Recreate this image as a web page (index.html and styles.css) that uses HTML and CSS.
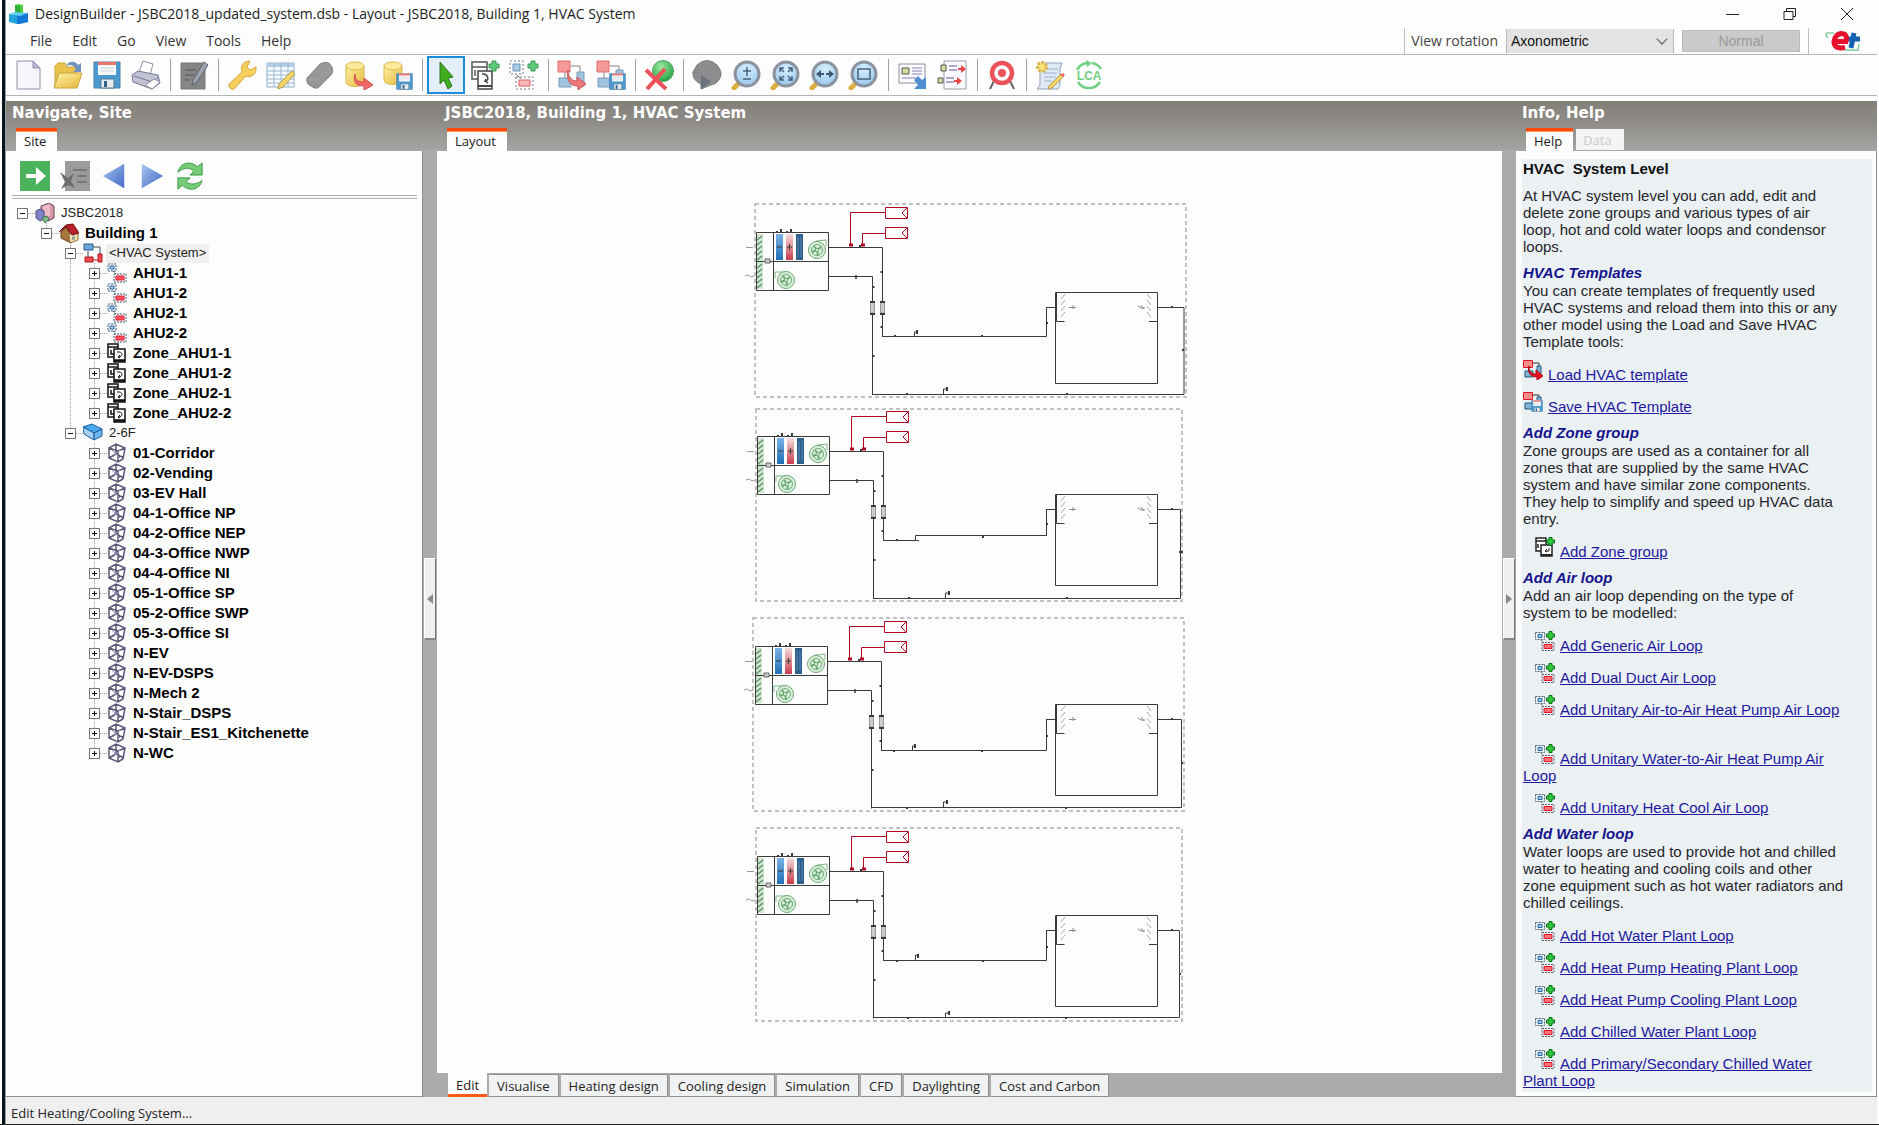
FILE: index.html
```html
<!DOCTYPE html>
<html lang="en">
<head>
<meta charset="utf-8">
<title>DesignBuilder - JSBC2018_updated_system.dsb</title>
<link rel="stylesheet" href="styles.css">
</head>
<body>
<svg class="defs" aria-hidden="true">
  <defs>
    <linearGradient id="g-blue" x1="0" y1="0" x2="0" y2="1"><stop offset="0" stop-color="#7db3e6"/><stop offset="1" stop-color="#1d6fb8"/></linearGradient>
    <linearGradient id="g-red" x1="0" y1="0" x2="0" y2="1"><stop offset="0" stop-color="#f4dede"/><stop offset="1" stop-color="#c93a4a"/></linearGradient>
    <linearGradient id="g-yel" x1="0" y1="0" x2="1" y2="1"><stop offset="0" stop-color="#fff3a6"/><stop offset="1" stop-color="#e5b73a"/></linearGradient>
    <linearGradient id="g-nav" x1="0" y1="0" x2="1" y2="1"><stop offset="0" stop-color="#a9c6f0"/><stop offset="1" stop-color="#3f68c4"/></linearGradient>
    <radialGradient id="g-ball" cx=".4" cy=".3" r=".8"><stop offset="0" stop-color="#9be7a0"/><stop offset="1" stop-color="#1c9a3c"/></radialGradient>
    <radialGradient id="g-lens" cx=".5" cy=".3" r=".8"><stop offset="0" stop-color="#d8eefc"/><stop offset="1" stop-color="#8ec3ec"/></radialGradient>

    <symbol id="plus" viewBox="0 0 12 12"><path d="M4 1h4v3h3v4H8v3H4V8H1V4h3z" fill="#5fc97c" stroke="#3c9a58"/></symbol>
    <symbol id="disk" viewBox="0 0 28 28"><path d="M1 1h26v26H1z" fill="#4a9ad0" stroke="#4a7fae"/><path d="M5 1h18v13H5z" fill="#f4f8fa"/><path d="M5 1h18v3H5z" fill="#f0736a"/><path d="M7 7h14M7 10h14" stroke="#c8d4dc"/><path d="M8 18h13v9H8z" fill="#e4ecf2" stroke="#5a7890"/><path d="M11 20h3v6h-3z" fill="#32618a"/></symbol>
    <symbol id="lens" viewBox="0 0 30 30"><path d="M3 28l6-6" stroke="#dcb040" stroke-width="5" stroke-linecap="round"/><circle cx="16" cy="14" r="12" fill="url(#g-lens)" stroke="#8c929e" stroke-width="3"/></symbol>

    <symbol id="i-new" viewBox="0 0 30 30"><path d="M3 1h16l7 7v21H3z" fill="#f5f5fb" stroke="#8f8fa8"/><path d="M19 1v7h7z" fill="#b9b9dc" stroke="#8f8fa8"/></symbol>
    <symbol id="i-open" viewBox="0 0 30 30"><path d="M2 27V6l3-3h7l2 4h10v6" fill="#e9c34d" stroke="#c9a53e"/><path d="M1 28l5-15h23l-5 15z" fill="url(#g-yel)" stroke="#c9a53e"/><path d="M13 6c2-5 9-6 12-1l3-2v9h-8l3-3c-2-4-6-5-10-3z" fill="#6e93bd"/></symbol>
    <symbol id="i-save" viewBox="0 0 30 30"><use href="#disk" x="1" y="1" width="28" height="28"/></symbol>
    <symbol id="i-print" viewBox="0 0 30 30"><path d="M8 12L12 1l10 3-3 11z" fill="#fff" stroke="#8c8ca4"/><path d="M1 15l6-4 20 4 2 8-8 6L2 22z" fill="#c3c3d6" stroke="#77778f"/><path d="M3 16l18 6 7-5" stroke="#77778f" fill="none"/><path d="M14 25l9-6 6 3-8 7z" fill="#fff" stroke="#8c8ca4"/></symbol>
    <symbol id="i-edit" viewBox="0 0 30 30"><path d="M2 3h24v26H2z" fill="#858585" stroke="#777"/><path d="M6 10h11M6 15h9M6 20h4" stroke="#666" stroke-width="1.500"/><path d="M14 20L25 2l4 3-11 17-5 3z" fill="#9aa3ad" stroke="#5d646c"/></symbol>
    <symbol id="i-wrench" viewBox="0 0 30 30"><path d="M2 24L15 12c-2-5 1-11 8-11l-3 6 3 3 6-3c1 7-5 11-10 9L7 29c-3 1-6-2-5-5z" fill="#f7cf5c" stroke="#d8a640"/></symbol>
    <symbol id="i-table" viewBox="0 0 30 30"><path d="M1 3h27v24H1z" fill="#f6fafd" stroke="#8eaecb"/><path d="M1 3h27v4H1z" fill="#b4cde4"/><path d="M1 11h27M1 15h27M1 19h27M1 23h27M8 3v24M15 3v24M22 3v24" stroke="#9db8d2"/><path d="M13 24L26 11l3 3-12 13-5 2z" fill="#f4d667" stroke="#b99a4c"/></symbol>
    <symbol id="i-eraser" viewBox="0 0 30 30"><path d="M2 18L15 4q5-3 9-1l3 4q2 5-1 8L13 28q-4 1-7-2l-3-2q-2-3-1-6z" fill="#979797" stroke="#858585"/><path d="M3 19l9 1L26 7" stroke="#a4a4a4" fill="none"/></symbol>
    <symbol id="i-dbload" viewBox="0 0 30 30"><path d="M2 6v16c0 6 18 6 18 0V6z" fill="url(#g-yel)" stroke="#d8b94c"/><ellipse cx="11" cy="6" rx="9" ry="4" fill="#fbeb9a" stroke="#d8b94c"/><path d="M11 14c0 7 4 8 9 8v-4l9 7-9 5v-4c-8 0-11-4-9-12z" fill="#ee6a6a" stroke="#d34e52"/></symbol>
    <symbol id="i-dbsave" viewBox="0 0 30 30"><path d="M1 6v14c0 6 18 6 18 0V6z" fill="url(#g-yel)" stroke="#d8b94c"/><ellipse cx="10" cy="6" rx="9" ry="4" fill="#fbeb9a" stroke="#d8b94c"/><use href="#disk" x="13" y="13" width="17" height="17"/></symbol>
    <symbol id="i-cursor" viewBox="0 0 30 30"><path d="M9 2l13 15-5 1 4 8-4 3-4-9-4 4z" fill="#3fae1f" stroke="#2c7418"/></symbol>
    <symbol id="i-zone" viewBox="0 0 30 30"><path d="M2 2h15v17H2zM2 7h15M5 10v6" fill="none" stroke="#555" stroke-width="1.500"/><path d="M8 11h14v18H8z" fill="#fff" stroke="#444" stroke-width="1.500"/><path d="M8 26h14" stroke="#444" stroke-width="2"/><path d="M12 14c6-1 8 7 3 7l1-2m-1 2l3 2" fill="none" stroke="#444" stroke-width="1.500"/><use href="#plus" x="18" y="0" width="12" height="12"/></symbol>
    <symbol id="i-loop" viewBox="0 0 30 30"><path d="M1 1h13v13H1z" fill="none" stroke="#77808c" stroke-dasharray="2 2"/><path d="M4 4h7v7H4z" fill="#a9cbe8" stroke="#6b8eb0"/><path d="M8 15l4 4" stroke="#77808c"/><path d="M7 17h17v12H7z" fill="none" stroke="#77808c" stroke-dasharray="2 2"/><path d="M10 20h11v6H10z" fill="#f9b9b9" stroke="#e05a60"/><use href="#plus" x="18" y="0" width="12" height="12"/></symbol>
    <symbol id="i-tload" viewBox="0 0 30 30"><path d="M14 6h9v6M8 12v6M13 22h5" stroke="#888" fill="none"/><path d="M2 18h12v9H2zM20 12h7v14h-7z" fill="#9fc3de" stroke="#7a9db8"/><path d="M1 1h12v11H1z" fill="#f59a9a" stroke="#e06a6e"/><path d="M11 10c0 8 4 11 9 11v-4l9 7-8 6v-4c-8 0-12-6-10-16z" fill="#ee7a7e" stroke="#cf5358"/></symbol>
    <symbol id="i-tsave" viewBox="0 0 30 30"><path d="M14 6h9v6M8 12v6" stroke="#888" fill="none"/><path d="M2 18h12v9H2zM20 10h7v14h-7z" fill="#9fc3de" stroke="#7a9db8"/><path d="M1 1h12v11H1z" fill="#f59a9a" stroke="#e06a6e"/><use href="#disk" x="13" y="13" width="17" height="17"/></symbol>
    <symbol id="i-del" viewBox="0 0 30 30"><circle cx="19" cy="11" r="10.500" fill="url(#g-ball)" stroke="#4aa660"/><path d="M2 10l20 19M21 9L3 29" stroke="#f0505a" stroke-width="4"/></symbol>
    <symbol id="i-ball" viewBox="0 0 30 30"><path d="M5 5q10-9 20 0 6 7 3 13-3 6-9 7l-10 4V24q-9-4-8-12z" fill="#8d8d8f" stroke="#7b7b7d"/><path d="M9 15l10 7-10 7z" fill="#6b727b"/></symbol>
    <symbol id="i-zin" viewBox="0 0 30 30"><use href="#lens"/><path d="M16 7v9M12 11h8M12 19h8" stroke="#47617e" stroke-width="1.500"/></symbol>
    <symbol id="i-zfit" viewBox="0 0 30 30"><use href="#lens"/><path d="M10 12V8h4M18 8h4v4M22 16v4h-4M14 20h-4v-4M10 8l4 4M22 8l-4 4M22 20l-4-4M10 20l4-4" fill="none" stroke="#47617e" stroke-width="1.500"/></symbol>
    <symbol id="i-zpan" viewBox="0 0 30 30"><use href="#lens"/><path d="M7 14l5-4v3h3v2h-3v3zM25 14l-5-4v3h-3v2h3v3z" fill="#3f5874"/></symbol>
    <symbol id="i-zwin" viewBox="0 0 30 30"><use href="#lens"/><path d="M10 9h12v10H10z" fill="none" stroke="#47617e" stroke-width="1.500"/></symbol>
    <symbol id="i-card" viewBox="0 0 30 30"><path d="M1 4h26v19H1z" fill="#fbfbff" stroke="#8b8b9c"/><path d="M4 8h7v6H4z" fill="#cfe09a" stroke="#555"/><path d="M14 8h10M14 11h10M14 14h10M4 18h14" stroke="#b0a8cc" stroke-width="1.500"/><path d="M16 20l4-4 4 4 4-3v12H16l4-4z" fill="#4d8fd0"/></symbol>
    <symbol id="i-map" viewBox="0 0 30 30"><path d="M7 1h22v28H7z" fill="#fbfbff" stroke="#9a9aaa"/><path d="M4 5h5v6H4zM1 18h5v5H1z" fill="#cfe09a" stroke="#555"/><path d="M12 6h8M12 10h8M9 18h8M9 22h8" stroke="#b0a8cc" stroke-width="2"/><path d="M21 8h3V5l5 4-5 4v-3h-3zM17 20h3v-3l5 4-5 4v-3h-3z" fill="#e8484c"/></symbol>
    <symbol id="i-target" viewBox="0 0 30 30"><path d="M7 21l-4 8M23 21l4 8" stroke="#666" stroke-width="2"/><circle cx="15" cy="13" r="10" fill="#fff" stroke="#ea5259" stroke-width="4.500"/><circle cx="15" cy="13" r="4" fill="#ea5259"/></symbol>
    <symbol id="i-script" viewBox="0 0 30 30"><path d="M8 3h19l-2 5v17l-2 4H2l3-4V8z" fill="#dfe9f5" stroke="#91a3bc"/><path d="M12 9h11M9 13h13M9 17h12M9 21h8" stroke="#9db1cb"/><circle cx="7" cy="7" r="4.500" fill="#fbe07a" stroke="#d6b245" stroke-width="3" stroke-dasharray="2.500 1.500"/><path d="M14 26l12-12 3 2-12 12-4 1z" fill="#f4d667" stroke="#b99a4c"/><path d="M25 15l3-2 2 2-2 2z" fill="#ee6a6a"/></symbol>
    <symbol id="i-lca" viewBox="0 0 30 30"><path d="M3 10A13 13 0 0 1 14 3M18 3A13 13 0 0 1 27 9M26 22A13 13 0 0 1 4 22" fill="none" stroke="#72cf86" stroke-width="2.500"/><path d="M12 0l6 3-5 4z" fill="#72cf86"/><text x="15" y="20" class="lca">LCA</text></symbol>

    <symbol id="n-go" viewBox="0 0 30 30"><path d="M0 0h30v30H0z" fill="#4db25c"/><path d="M6 13h10V6l10 9-10 9v-7H6z" fill="#fff"/></symbol>
    <symbol id="n-list" viewBox="0 0 30 30"><path d="M5 0h25v30H5z" fill="#9b9b9b"/><path d="M13 9h14M17 15h10M17 21h10" stroke="#777" stroke-width="2"/><path d="M0 11l8 6 6-5-3 8 4 7-7-3-7 4 4-7z" fill="#6e6e6e"/></symbol>
    <symbol id="n-prev" viewBox="0 0 30 30"><path d="M26 2v26L3 15z" fill="url(#g-nav)"/></symbol>
    <symbol id="n-next" viewBox="0 0 30 30"><path d="M4 2v26l23-13z" fill="url(#g-nav)"/></symbol>
    <symbol id="n-sync" viewBox="0 0 30 30"><path d="M2 11C4 1 15-2 23 5l5-4v13H15l4-4C15 5 8 6 2 11zM28 20c-3 10-14 12-21 5l-5 4V17h13l-4 4c4 4 11 3 17-1z" fill="#74cc74" stroke="#3b9648"/></symbol>

    <symbol id="t-site" viewBox="0 0 20 20"><path d="M6 3l8-3 5 3v12l-6 3-7-4z" fill="#d99aa8" stroke="#5a4450"/><path d="M8 3l7-2v12l-7 1z" fill="#efb9c5"/><path d="M1 8l4-2 4 2v8l-4 2-4-3z" fill="#7f82c8" stroke="#4b4b80"/><path d="M7 15l5-2 2 3-4 4z" fill="#7ebd86" stroke="#447a4c"/></symbol>
    <symbol id="t-house" viewBox="0 0 20 20"><path d="M2 9l5-5 5 9v7l-10-5z" fill="#a8763a" stroke="#6b4420"/><path d="M10 12l3-4 6 3v6l-8 3z" fill="#f1dfae" stroke="#8b6f40"/><path d="M0 9L7 2l7-1 6 9-7 2-6-8z" fill="#b8202c" stroke="#701018"/><path d="M13 14l3-1v3l-3 1z" fill="#8b9c9a"/></symbol>
    <symbol id="t-hvac" viewBox="0 0 20 20"><path d="M10 4h7v8M5 8v6" stroke="#3a4a5a" fill="none"/><path d="M1 1h9v6H1z" fill="#6aa6dc" stroke="#2b5a8a"/><path d="M2 14h8v5H2zM15 11h4v8h-4z" fill="#f04a50" stroke="#b01820"/><path d="M10 17h5" stroke="#b01820"/></symbol>
    <symbol id="t-ahu" viewBox="0 0 20 20"><path d="M1 1h8v7H1zM7 11h12v8H7zM6 8l3 3" fill="none" stroke="#3b5d7e" stroke-dasharray="2 1"/><path d="M3 3h4v3H3z" fill="#a5cdec" stroke="#2b6ba4"/><path d="M9 13h8v4H9z" fill="#ff5560" stroke="#e01828"/></symbol>
    <symbol id="t-zone" viewBox="0 0 20 20"><path d="M1 1h10v13H1zM1 4h10M4 7v4h4" fill="#fff" stroke="#111" stroke-width="1.500"/><path d="M7 6h11v13H7z" fill="#fff" stroke="#111" stroke-width="1.500"/><path d="M7 17.500h11" stroke="#111" stroke-width="2.500"/><path d="M10 9c6-1 7 5 1 5l2-2m-2 2l2 1" fill="none" stroke="#111"/></symbol>
    <symbol id="t-block" viewBox="0 0 20 20"><path d="M0 4l9-3 10 5-8 4z" fill="#49a8ee" stroke="#1c5e9e"/><path d="M0 4l11 6v7L1 11z" fill="#a8d2f6" stroke="#1c5e9e"/><path d="M11 10l8-4v7l-8 4z" fill="#6fb4ec" stroke="#1c5e9e"/></symbol>
    <symbol id="t-cube" viewBox="0 0 20 20"><path d="M2 5l7-4 9 4-2 11-5 3-9-4zM2 5l9 3 7-3M11 8v11M9 1v10l-7 4M9 11l8 4" fill="none" stroke="#5c5878" stroke-width="1.500"/><path d="M5 7l8 8M13 7l-7 7" stroke="#8d89aa"/></symbol>

    <symbol id="h-plus" viewBox="0 0 9 9"><path d="M3 .5h3v2.500h2.500v3H6v2.500H3V6H.5V3H3z" fill="#2fd03c" stroke="#0a6a18"/></symbol>
    <symbol id="h-loop" viewBox="0 0 20 20"><path d="M.5 1.500h9v7h-9zM7 11.500h12v8H7zM6 9l3 3" fill="none" stroke="#51616e" stroke-dasharray="2 1"/><path d="M3 3.500h4v3H3z" fill="#a5cdec" stroke="#2b6ba4"/><path d="M9 13.500h8v4H9z" fill="#ff7078" stroke="#e01828"/><use href="#h-plus" x="11" y="0" width="9" height="9"/></symbol>
    <symbol id="h-zone" viewBox="0 0 20 20"><path d="M1 1h10v13H1zM1 4h10M3 7v4" fill="#fff" stroke="#222" stroke-width="1.500"/><path d="M6 8h11v11H6z" fill="#fff" stroke="#222" stroke-width="1.500"/><path d="M6 18h11" stroke="#222" stroke-width="2"/><path d="M14 11v3h-4l2-2m-2 2l2 1" fill="none" stroke="#222"/><use href="#h-plus" x="11" y="0" width="9" height="9"/></symbol>
    <symbol id="h-load" viewBox="0 0 20 20"><path d="M10 3h6v4" stroke="#333" fill="none"/><path d="M2 11h8v6H2zM14 6h4v10h-4z" fill="#7fb2d8" stroke="#2c5878"/><path d="M.5.500h9v7h-9z" fill="#ff8a8a" stroke="#d81a24"/><path d="M6 6c0 7 3 8 7 8v-4l7 6-6 4v-3C8 17 4 13 6 6z" fill="#f01420" stroke="#a80810"/></symbol>
    <symbol id="h-save" viewBox="0 0 20 20"><path d="M10 3h6v4" stroke="#333" fill="none"/><path d="M2 11h8v6H2zM14 5h4v6h-4z" fill="#7fb2d8" stroke="#2c5878"/><path d="M.5.500h9v7h-9z" fill="#ff8a8a" stroke="#d81a24"/><use href="#disk" x="8" y="8" width="12" height="12"/></symbol>

    <g id="fan" fill="none" stroke="#6aaa72"><circle cx="0" cy="0" r="8.500" fill="#dcefdc"/><circle cx="0" cy="0" r="5.500"/><path d="M0 0l4-3M0 0l1 5M0 0l-5 2M0 0l-3-4" stroke-width="2"/><circle cx="0" cy="0" r="1.500" fill="#fff"/></g>
    <g id="ahu" fill="none" stroke="#3a3a3a">
      <path d="M1 2h6v55H1z" fill="#cfe6d0" stroke="none"/>
      <path d="M1 8l5-4M1 13l5-4M1 18l5-4M1 23l5-4M1 28l5-4M1 36l5-4M1 41l5-4M1 46l5-4M1 51l5-4M1 56l5-4" stroke="#5f9367" stroke-width="1.500"/>
      <path d="M20 2h7v26h-7z" fill="url(#g-blue)" stroke="none"/><path d="M30 2h7v26h-7z" fill="url(#g-red)" stroke="none"/><path d="M40 2h7v26h-7z" fill="#2c5f8c" stroke="none"/>
      <path d="M42 5v20M45 5v20" stroke="#5f88b0"/><path d="M21 15h5M31 15h5M33.500 12v6"/>
      <path d="M60 9l10-1v6" stroke="#7fb785"/><use href="#fan" x="61" y="18"/>
      <path d="M19 46v-6h10" stroke="#7fb785"/><use href="#fan" x="30" y="48"/>
      <path d="M.5.500h72v58H.5zM.5 29.500h72M17.500 0v58"/>
      <path d="M9 27h5v4H9z" fill="#ccc" stroke="#666"/>
      <path d="M20 0h2M25-3v4M30 0h2M35-3v4" stroke-width="2"/>
      <path d="M-10 15.500h7M-11 44l3-1 3 2 3-1" stroke="#999"/>
      <path d="M73 15.500h53.500v89.500M73 44.500h43.500v118"/>
      <path d="M100 43v4" stroke-width="1.500"/>
      <path d="M114.500 70h4v11h-4zM124.500 70h4v11h-4z" fill="#ccc" stroke="#999"/>
      <path d="M114 70h5M114 82h5M124 70h5M124 82h5" stroke-width="2"/>
      <path d="M125.500 39v2M125.500 94v2M117.500 54v2M117.500 123v2M103 14h2" stroke-width="2"/>
      <g stroke="#b00a22"><path d="M129 -19.500H94.500V14M129 1.500H106.500V14"/><path d="M129.500 -24.500h22v11h-22zM129.500 -4.500h22v11h-22zM151 -24l-5 5 5 5M151 -4l-5 5 5 5"/><path d="M93 13h4M105 13h4" stroke-width="3"/></g>
    </g>
    <g id="room" fill="none" stroke="#3a3a3a">
      <path d="M.5.500h102v91H.5zM1.500 1v28.500h8M94 29.500h8.500M-9 15.500h9M102 15.500h22"/>
      <path d="M6 7l4-5M6 13l4-5M6 19l4-5M6 25l4-5M92 2l4 5M92 8l4 5M92 14l4 5M92 20l4 5" stroke="#aaa"/>
      <path d="M14 15.500h7M18 13v4M83 14l3 2h4M86 13l3 4" stroke="#888"/>
      <path d="M117 14v2" stroke-width="2"/>
    </g>
  </defs>
</svg>

<div class="app">
  <header class="titlebar">
    <svg class="logo" viewBox="0 0 20 20"><path d="M6 1l3-1 5 1v9H6z" fill="#4ccf3c"/><path d="M6 1l5 1v9H6z" fill="#2fae3a"/><path d="M0 10l8 1v9l-8-2z" fill="#1fa5d8"/><path d="M8 11l11-2v9l-8 2H8z" fill="#1478d8"/><path d="M0 10l6-2 13 1-8 3z" fill="#5ecdf4"/></svg>
    <h1 class="title">DesignBuilder - JSBC2018_updated_system.dsb - Layout - JSBC2018, Building 1, HVAC System</h1>
    <div class="winbtns">
      <button aria-label="Minimize"><svg viewBox="0 0 14 14"><path d="M0 7.500h13"/></svg></button>
      <button aria-label="Restore"><svg viewBox="0 0 14 14"><path d="M1 4.500h9v8H1zM3.500 4V1.500h9v8H10"/></svg></button>
      <button aria-label="Close"><svg viewBox="0 0 14 14"><path d="M1 1l12 12M13 1L1 13"/></svg></button>
    </div>
  </header>

  <div class="menurow">
    <nav class="menu"><button>File</button><button>Edit</button><button>Go</button><button>View</button><button>Tools</button><button>Help</button></nav>
    <div class="viewbar">
      <label for="rotation">View rotation</label>
      <div class="selectbox"><select id="rotation"><option>Axonometric</option></select></div>
      <button class="normal" disabled>Normal</button>
    </div>
    <svg class="eplus" viewBox="0 0 36 22"><path d="M9 3H2q-2 2 1 5" stroke="#7fcf9a" fill="none" stroke-width="1.500"/><path d="M20 20h13l1-6" stroke="#7fcf9a" fill="none" stroke-width="1.500"/><path d="M29 3l-3 15M21 9h14" stroke="#1460b4" stroke-width="5"/><path d="M10 11.500h11q2-8-5-8-6 1-7 8 0 8 11 6" fill="none" stroke="#e8102c" stroke-width="5"/></svg>
  </div>

  <div class="toolbar">
    <button aria-label="New"><svg><use href="#i-new"/></svg></button>
    <button aria-label="Open"><svg><use href="#i-open"/></svg></button>
    <button aria-label="Save"><svg><use href="#i-save"/></svg></button>
    <button aria-label="Print"><svg><use href="#i-print"/></svg></button>
    <i class="sep"></i>
    <button aria-label="Edit"><svg><use href="#i-edit"/></svg></button>
    <i class="sep"></i>
    <button aria-label="Options"><svg><use href="#i-wrench"/></svg></button>
    <button aria-label="Table"><svg><use href="#i-table"/></svg></button>
    <button aria-label="Clear"><svg><use href="#i-eraser"/></svg></button>
    <button aria-label="Load data"><svg><use href="#i-dbload"/></svg></button>
    <button aria-label="Save data"><svg><use href="#i-dbsave"/></svg></button>
    <i class="sep"></i>
    <button class="active" aria-label="Select"><svg><use href="#i-cursor"/></svg></button>
    <button aria-label="Add zone group"><svg><use href="#i-zone"/></svg></button>
    <button aria-label="Add loop"><svg><use href="#i-loop"/></svg></button>
    <i class="sep"></i>
    <button aria-label="Load template"><svg><use href="#i-tload"/></svg></button>
    <button aria-label="Save template"><svg><use href="#i-tsave"/></svg></button>
    <i class="sep"></i>
    <button aria-label="Delete"><svg><use href="#i-del"/></svg></button>
    <i class="sep"></i>
    <button aria-label="Orbit"><svg><use href="#i-ball"/></svg></button>
    <button aria-label="Zoom"><svg><use href="#i-zin"/></svg></button>
    <button aria-label="Fit"><svg><use href="#i-zfit"/></svg></button>
    <button aria-label="Pan"><svg><use href="#i-zpan"/></svg></button>
    <button aria-label="Zoom window"><svg><use href="#i-zwin"/></svg></button>
    <i class="sep wide"></i>
    <button aria-label="Export"><svg><use href="#i-card"/></svg></button>
    <button aria-label="Mapping"><svg><use href="#i-map"/></svg></button>
    <i class="sep wide"></i>
    <button aria-label="Target"><svg><use href="#i-target"/></svg></button>
    <i class="sep"></i>
    <button aria-label="Script"><svg><use href="#i-script"/></svg></button>
    <button aria-label="Life cycle"><svg><use href="#i-lca"/></svg></button>
  </div>

  <main class="workspace">
    <section class="pane">
      <div class="panehead"><h2>Navigate, Site</h2><div class="tabs"><button class="tab on">Site</button></div></div>
      <div class="panebody nav">
        <div class="navbar">
          <button aria-label="Go"><svg><use href="#n-go"/></svg></button>
          <button aria-label="List"><svg><use href="#n-list"/></svg></button>
          <button aria-label="Previous"><svg><use href="#n-prev"/></svg></button>
          <button aria-label="Next"><svg><use href="#n-next"/></svg></button>
          <button aria-label="Refresh"><svg><use href="#n-sync"/></svg></button>
        </div>
        <ul class="tree">
          <li><div class="row"><button class="exp" aria-label="Collapse"></button><svg><use href="#t-site"/></svg><span>JSBC2018</span></div>
            <ul>
              <li><div class="row b"><button class="exp" aria-label="Collapse"></button><svg><use href="#t-house"/></svg><span>Building 1</span></div>
                <ul>
                  <li><div class="row sel"><button class="exp" aria-label="Collapse"></button><svg><use href="#t-hvac"/></svg><span>&lt;HVAC System&gt;</span></div>
                    <ul class="leaves">
                      <li><div class="row"><button class="exp" aria-label="Expand"></button><svg><use href="#t-ahu"/></svg><span>AHU1-1</span></div></li>
                      <li><div class="row"><button class="exp" aria-label="Expand"></button><svg><use href="#t-ahu"/></svg><span>AHU1-2</span></div></li>
                      <li><div class="row"><button class="exp" aria-label="Expand"></button><svg><use href="#t-ahu"/></svg><span>AHU2-1</span></div></li>
                      <li><div class="row"><button class="exp" aria-label="Expand"></button><svg><use href="#t-ahu"/></svg><span>AHU2-2</span></div></li>
                      <li><div class="row"><button class="exp" aria-label="Expand"></button><svg><use href="#t-zone"/></svg><span>Zone_AHU1-1</span></div></li>
                      <li><div class="row"><button class="exp" aria-label="Expand"></button><svg><use href="#t-zone"/></svg><span>Zone_AHU1-2</span></div></li>
                      <li><div class="row"><button class="exp" aria-label="Expand"></button><svg><use href="#t-zone"/></svg><span>Zone_AHU2-1</span></div></li>
                      <li><div class="row"><button class="exp" aria-label="Expand"></button><svg><use href="#t-zone"/></svg><span>Zone_AHU2-2</span></div></li>
                    </ul>
                  </li>
                  <li><div class="row"><button class="exp" aria-label="Collapse"></button><svg><use href="#t-block"/></svg><span>2-6F</span></div>
                    <ul class="leaves">
                      <li><div class="row"><button class="exp" aria-label="Expand"></button><svg><use href="#t-cube"/></svg><span>01-Corridor</span></div></li>
                      <li><div class="row"><button class="exp" aria-label="Expand"></button><svg><use href="#t-cube"/></svg><span>02-Vending</span></div></li>
                      <li><div class="row"><button class="exp" aria-label="Expand"></button><svg><use href="#t-cube"/></svg><span>03-EV Hall</span></div></li>
                      <li><div class="row"><button class="exp" aria-label="Expand"></button><svg><use href="#t-cube"/></svg><span>04-1-Office NP</span></div></li>
                      <li><div class="row"><button class="exp" aria-label="Expand"></button><svg><use href="#t-cube"/></svg><span>04-2-Office NEP</span></div></li>
                      <li><div class="row"><button class="exp" aria-label="Expand"></button><svg><use href="#t-cube"/></svg><span>04-3-Office NWP</span></div></li>
                      <li><div class="row"><button class="exp" aria-label="Expand"></button><svg><use href="#t-cube"/></svg><span>04-4-Office NI</span></div></li>
                      <li><div class="row"><button class="exp" aria-label="Expand"></button><svg><use href="#t-cube"/></svg><span>05-1-Office SP</span></div></li>
                      <li><div class="row"><button class="exp" aria-label="Expand"></button><svg><use href="#t-cube"/></svg><span>05-2-Office SWP</span></div></li>
                      <li><div class="row"><button class="exp" aria-label="Expand"></button><svg><use href="#t-cube"/></svg><span>05-3-Office SI</span></div></li>
                      <li><div class="row"><button class="exp" aria-label="Expand"></button><svg><use href="#t-cube"/></svg><span>N-EV</span></div></li>
                      <li><div class="row"><button class="exp" aria-label="Expand"></button><svg><use href="#t-cube"/></svg><span>N-EV-DSPS</span></div></li>
                      <li><div class="row"><button class="exp" aria-label="Expand"></button><svg><use href="#t-cube"/></svg><span>N-Mech 2</span></div></li>
                      <li><div class="row"><button class="exp" aria-label="Expand"></button><svg><use href="#t-cube"/></svg><span>N-Stair_DSPS</span></div></li>
                      <li><div class="row"><button class="exp" aria-label="Expand"></button><svg><use href="#t-cube"/></svg><span>N-Stair_ES1_Kitchenette</span></div></li>
                      <li><div class="row"><button class="exp" aria-label="Expand"></button><svg><use href="#t-cube"/></svg><span>N-WC</span></div></li>
                    </ul>
                  </li>
                </ul>
              </li>
            </ul>
          </li>
        </ul>
      </div>
    </section>

    <div class="divider"><button aria-label="Collapse navigator"><svg viewBox="0 0 6 10"><path d="M6 0v10L0 5z"/></svg></button></div>

    <section class="pane main">
      <div class="panehead"><h2>JSBC2018, Building 1, HVAC System</h2><div class="tabs"><button class="tab on">Layout</button></div></div>
      <div class="panebody canvas">
        <svg class="diagram" viewBox="740 190 460 850" width="460" height="850">
          <g fill="none" stroke="#c2c2c2" stroke-width="2" stroke-dasharray="4 3">
            <path d="M755 204h431v193H755zM756 409h426v192H756zM753 618h431v193H753zM756 828h426v193H756z"/>
          </g>
          <use href="#ahu" x="756" y="232"/><use href="#ahu" x="757" y="436"/><use href="#ahu" x="755" y="646"/><use href="#ahu" x="757" y="856"/>
          <use href="#room" x="1055" y="292"/><use href="#room" x="1055" y="494"/><use href="#room" x="1055" y="704"/><use href="#room" x="1055" y="915"/>
          <g fill="none" stroke="#3a3a3a">
            <path d="M882 336.500h164.500v-29M872 394.500h312v-87h-5"/>
            <path d="M883 540.500h36M915.500 540v-4.500h131v-26M873 598.500h307.500v-89h-5"/>
            <path d="M881 750.500h165.500v-31M871 807.500h310.500v-88h-5"/>
            <path d="M883 960.500h163.500v-30M873 1017.500h306.500v-87h-5"/>
            <path d="M914.500 336v-4h3M943.500 394v-5h4M945.500 598v-5h4M912.500 750v-4h3M943.500 807v-5h4M915.500 960v-5h3M945.500 1017v-4h4"/>
            <path d="M894 336h2M981 336h2M906 394h2M1066 394h2M1047 322v2M1183 349v2M896 540h2M982 537h2M908 598h2M1066 598h2M1047 523v2M1179 552h4M893 751h2M981 751h2M906 808h2M1065 808h2M1047 735v2M1182 762v2M896 961h2M982 961h2M907 1018h2M1065 1018h2M1047 946v2M1180 973v2M917 330v4M947 387v4M949 591v4M915 744v4M947 800v4M918 954v4M949 1011v4" stroke-width="2"/>
          </g>
        </svg>
      </div>
      <div class="modes"><button class="mode on">Edit</button><button class="mode">Visualise</button><button class="mode">Heating design</button><button class="mode">Cooling design</button><button class="mode">Simulation</button><button class="mode">CFD</button><button class="mode">Daylighting</button><button class="mode">Cost and Carbon</button></div>
    </section>

    <div class="divider"><button aria-label="Collapse help"><svg viewBox="0 0 6 10"><path d="M0 0v10l6-5z"/></svg></button></div>

    <section class="pane">
      <div class="panehead"><h2>Info, Help</h2><div class="tabs"><button class="tab on">Help</button><button class="tab off" disabled>Data</button></div></div>
      <div class="panebody info">
        <article class="help">
          <h3>HVAC&nbsp; System Level</h3>
          <p class="intro">At HVAC system level you can add, edit and delete zone groups and various types of air<br>loop, hot and cold water loops and condensor<br>loops.</p>
          <h4>HVAC Templates</h4>
          <p>You can create templates of frequently used HVAC systems and reload them into this or any other model using the Load and Save HVAC Template tools:</p>
          <ul>
            <li><svg><use href="#h-load"/></svg><a href="#">Load HVAC template</a></li>
            <li><svg><use href="#h-save"/></svg><a href="#">Save HVAC Template</a></li>
          </ul>
          <h4>Add Zone group</h4>
          <p>Zone groups are used as a container for all<br>zones that are supplied by the same HVAC system and have similar zone components. They help to simplify and speed up HVAC data entry.</p>
          <ul class="in">
            <li><svg><use href="#h-zone"/></svg><a href="#">Add Zone group</a></li>
          </ul>
          <h4>Add Air loop</h4>
          <p>Add an air loop depending on the type of<br>system to be modelled:</p>
          <ul class="in">
            <li><svg><use href="#h-loop"/></svg><a href="#">Add Generic Air Loop</a></li>
            <li><svg><use href="#h-loop"/></svg><a href="#">Add Dual Duct Air Loop</a></li>
            <li class="spaced"><svg><use href="#h-loop"/></svg><a href="#">Add Unitary Air-to-Air Heat Pump Air Loop</a></li>
            <li><svg><use href="#h-loop"/></svg><a href="#">Add Unitary Water-to-Air Heat Pump Air Loop</a></li>
            <li><svg><use href="#h-loop"/></svg><a href="#">Add Unitary Heat Cool Air Loop</a></li>
          </ul>
          <h4>Add Water loop</h4>
          <p>Water loops are used to provide hot and chilled water to heating and cooling coils and other<br>zone equipment such as hot water radiators and chilled ceilings.</p>
          <ul class="in">
            <li><svg><use href="#h-loop"/></svg><a href="#">Add Hot Water Plant Loop</a></li>
            <li><svg><use href="#h-loop"/></svg><a href="#">Add Heat Pump Heating Plant Loop</a></li>
            <li><svg><use href="#h-loop"/></svg><a href="#">Add Heat Pump Cooling Plant Loop</a></li>
            <li><svg><use href="#h-loop"/></svg><a href="#">Add Chilled Water Plant Loop</a></li>
            <li><svg><use href="#h-loop"/></svg><a href="#">Add Primary/Secondary Chilled Water Plant Loop</a></li>
          </ul>
        </article>
      </div>
    </section>
  </main>

  <footer class="status">Edit Heating/Cooling System...</footer>
</div>
</body>
</html>
```
FILE: styles.css
```css
* { box-sizing: border-box; }
body { margin: 0; background: #fdfdfd; color: #1c1c1c; font: 14px/18px "Open Sans", sans-serif; }
button { font: inherit; color: inherit; background: none; border: 0; padding: 0; margin: 0; }
ul { list-style: none; margin: 0; padding: 0; }
svg { display: block; flex: none; }
.defs { position: absolute; width: 0; height: 0; }

.app { min-height: 100vh; display: flex; flex-direction: column; padding: 0 2px 0 6px; border-bottom: 1px solid #222;
  background: linear-gradient(90deg, #fff 2px, #08141a 2px, #08141a 5px, #98a0a2 5px, #98a0a2 6px, transparent 6px) #fdfdfd; }

.titlebar { display: flex; align-items: center; height: 28px; padding-left: 3px; }
.logo { width: 20px; height: 20px; margin-right: 6px; }
.title { margin: 0; font-size: 14px; font-weight: 400; flex: 1; }
.winbtns { display: flex; gap: 43px; padding-right: 23px; }
.winbtns button { height: 28px; display: flex; align-items: center; }
.winbtns svg { width: 14px; height: 14px; fill: none; stroke: #222; }

.menurow { display: flex; align-items: stretch; height: 27px; border-bottom: 1px solid #b4b4b4; }
.menu { display: flex; gap: 20px; padding-left: 24px; flex: 1; color: #333; }
.viewbar { display: flex; align-items: center; gap: 8px; border: 1px solid #bdbdbd; border-width: 0 1px; padding: 0 8px 0 6px; color: #444; font-size: 14px; }
.selectbox { position: relative; background: #e3e3e3; border: 1px solid #b8b8b8; border-width: 0 1px; }
.selectbox::after { content: ""; position: absolute; right: 7px; top: 6px; width: 7px; height: 7px; border: solid #555; border-width: 0 1px 1px 0; transform: rotate(45deg); pointer-events: none; }
.selectbox select { appearance: none; width: 166px; height: 24px; border: 0; background: none; padding: 0 4px; font: 14px "Liberation Sans", sans-serif; color: #111; }
.normal { width: 118px; height: 22px; background: #cacaca; border: 1px solid #bbb; color: #999; font: 14px "Liberation Sans", sans-serif; }
.eplus { width: 36px; height: 22px; margin: 0 16px; align-self: center; }

.toolbar { display: flex; gap: 1px; align-items: center; height: 41px; padding-left: 4px; border-bottom: 1px solid #b4b4b4; }
.toolbar button { width: 38px; height: 38px; display: grid; place-items: center; border: 1px solid transparent; }
.toolbar button.active { background: #e2eef8; border: 2px solid #1b8bdb; }
.toolbar svg { width: 30px; height: 30px; }
.sep { width: 8px; height: 32px; background: linear-gradient(#a0a0a0, #a0a0a0) center / 1px 100% no-repeat; }
.sep.wide { width: 10px; }
.lca { font: 700 12px "Liberation Sans", sans-serif; fill: #72cf86; text-anchor: middle; }

.workspace { flex: 1; display: grid; grid-template-columns: 417px 14px minmax(0, 1fr) 14px 361px; margin-top: 5px;
  background: linear-gradient(#837e78, #8e8b86 20px, #a3a5a2 49px, #ababab 50px) 0 0 / 100% 50px no-repeat #ababab; }
.pane { display: flex; flex-direction: column; min-width: 0; }
.panehead { height: 50px; display: flex; flex-direction: column; justify-content: space-between; }
.panehead h2 { margin: 3px 0 0 6px; font: 700 15px/18px "DejaVu Sans", sans-serif; color: #fff; }
.main .panehead h2 { margin-left: 8px; }
.tabs { display: flex; gap: 3px; align-items: flex-end; padding-left: 10px; }
.tab { height: 23px; padding: 0 11px 0 8px; background: #fdfdfd; font: 13px/18px "Open Sans", sans-serif; }
.tab.on { border-top: 3px solid #ff4a10; box-shadow: inset 0 1px #ff9540; }
.tab.off { height: 21px; padding: 0 12px 0 7px; background: #f2f4f5; color: #ccc; margin-bottom: 1px; }
.panebody { flex: 1; background: #fdfdfd; border: 1px solid #8e8e8e; border-width: 0 1px 1px 0; }
.canvas { border-width: 0; padding-top: 39px; display: flex; justify-content: center; align-items: flex-start; }

.navbar { display: flex; gap: 10px; margin: 0 5px 0 6px; padding: 10px 0 4px 8px; height: 48px; border-bottom: 4px double #b0b0b0; }
.navbar svg { width: 30px; height: 30px; }
.navbar button:nth-child(n+3) svg { width: 28px; }
.tree { padding: 4px 0 0 11px; font: 13px/20px "Liberation Sans", sans-serif; color: #222; }
.tree ul { padding-left: 24px; }
.tree li { background: repeating-linear-gradient(#a0a0a0 0 1px, transparent 1px 2px) 5px 0 / 1px 100% no-repeat; }
.tree li:last-child { background-size: 1px 10px; }
.tree > li { background: none; }
.row { display: flex; align-items: center; height: 20px; background: repeating-linear-gradient(90deg, #a0a0a0 0 1px, transparent 1px 2px) 11px center / 7px 1px no-repeat; }
.row svg { width: 20px; height: 20px; margin: 0 3px 0 7px; }
.row span { padding: 0 3px 2px; line-height: 17px; }
.row.b span, .leaves .row span { font-weight: 700; font-size: 15px; color: #000; }
.row.sel span { background: #efefef; }
.exp { width: 11px; height: 11px; border: 1px solid #777; background: linear-gradient(#111, #111) center / 5px 1px no-repeat #fff; }
.leaves .exp { background: linear-gradient(#111, #111) center / 5px 1px no-repeat, linear-gradient(#111, #111) center / 1px 5px no-repeat, #fff; }

.divider { display: flex; align-items: center; justify-content: center; }
.divider button { width: 12px; height: 82px; background: #f0f0f0; border: 1px solid #fff; border-right-color: #777; border-bottom: 2px solid #888; display: grid; place-items: center; }
.divider svg { width: 6px; height: 10px; fill: #888; }

.modes { display: flex; gap: 2px; height: 24px; padding-left: 11px; font-size: 13px; }
.mode { padding: 0 8px; margin-top: 1px; background: #f1f2f3; border: 1px solid #8e8e8e; border-width: 1px 1px 1px 0; color: #222; }
.mode.on { margin-top: 0; padding: 2px 8px 0; background: #fdfdfd; border: 0; border-bottom: 3px solid #ff5a14; }

.info { padding: 8px 4px 4px 6px; }
.help { min-height: 100%; padding: 1px 0 3px 1px; background: #ebf0f3; font: 15px/17px "Liberation Sans", sans-serif; color: #26262c; }
.help h3, .help h4 { margin: 0; font-size: 15px; line-height: 17px; }
.help h3 { color: #111; }
.help h4 { margin: 9px 0 1px; font-style: italic; color: #14148c; }
.help p { margin: 0; padding-right: 25px; }
.help .intro { margin-top: 10px; }
.help ul { padding-top: 1px; }
.help li { padding: 15px 25px 0 0; }
.help .in li { text-indent: 12px; }
.help .in .spaced { padding-bottom: 17px; }
.help li svg { display: inline-block; width: 20px; height: 20px; margin: -10px 5px 0 0; vertical-align: baseline; }
.help a { color: #2218a0; }

.status { height: 27px; padding: 7px 5px 0; background: #efefef; color: #222; font-size: 13px; }
```
